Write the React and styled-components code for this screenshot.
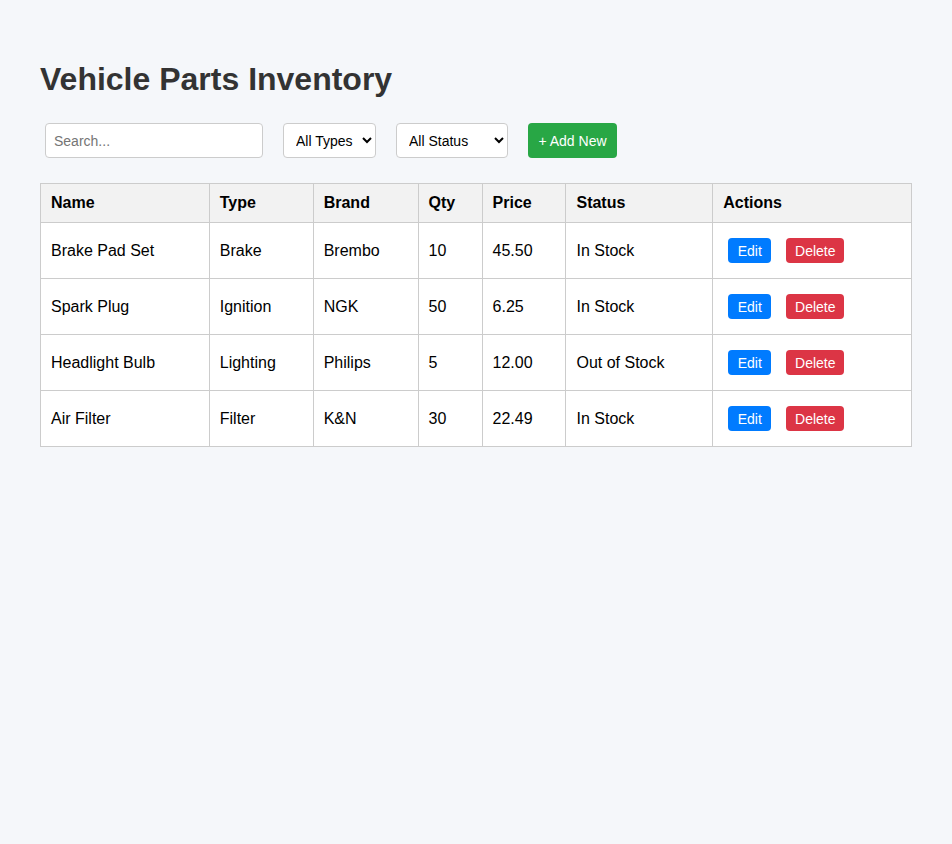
import styled, { createGlobalStyle } from 'styled-components';

const GlobalStyle = createGlobalStyle`
  body {
    margin: 0;
    padding: 40px;
    background-color: #f5f7fa;
    font-family: "Liberation Sans", Arial, sans-serif;
  }
`;

const Title = styled.h1`
  color: #333;
  font-size: 32px;
  margin: 21px 0 25px;
`;

const Controls = styled.div`
  display: flex;
  align-items: center;
  gap: 20px;
  padding-left: 5px;
  margin-bottom: 25px;
`;

const SearchInput = styled.input`
  width: 218px;
  height: 35px;
  box-sizing: border-box;
  padding: 8px;
  border: 1px solid #ccc;
  border-radius: 4px;
  font-family: inherit;
  font-size: 14px;
  background: #fff;
`;

const Select = styled.select`
  width: ${(p) => p.$width}px;
  height: 35px;
  box-sizing: border-box;
  padding: 0 4px 0 8px;
  border: 1px solid #ccc;
  border-radius: 4px;
  font-family: inherit;
  font-size: 14px;
  background: #fff;
  color: #000;
`;

const AddButton = styled.button`
  width: 89px;
  height: 35px;
  padding: 0;
  border: none;
  border-radius: 4px;
  background-color: #28a745;
  color: #fff;
  font-family: inherit;
  font-size: 14px;
`;

const Table = styled.table`
  width: 872px;
  border-collapse: collapse;
  background: #fff;
`;

const Th = styled.th`
  border: 1px solid #ccc;
  padding: 10px;
  text-align: left;
  background-color: #f2f2f2;
  font-size: 16px;
  line-height: 18px;
  color: #000;
`;

const Td = styled.td`
  border: 1px solid #ccc;
  padding: 10px;
  height: 35px;
  font-size: 16px;
  color: #000;
`;

const ActionButton = styled.button`
  margin: 5px;
  width: ${(p) => (p.$danger ? 58 : 43)}px;
  padding: 0;
  height: 25px;
  border: none;
  border-radius: 4px;
  color: #fff;
  font-family: inherit;
  font-size: 14px;
  background-color: ${(p) => (p.$danger ? '#dc3545' : '#007bff')};
  & + & {
    margin-left: 10px;
  }
`;

const columns = [
  { label: 'Name', width: 169 },
  { label: 'Type', width: 104 },
  { label: 'Brand', width: 105 },
  { label: 'Qty', width: 64 },
  { label: 'Price', width: 84 },
  { label: 'Status', width: 147 },
  { label: 'Actions', width: 199 },
];

const parts = [
  { name: 'Brake Pad Set', type: 'Brake', brand: 'Brembo', qty: 10, price: '45.50', status: 'In Stock' },
  { name: 'Spark Plug', type: 'Ignition', brand: 'NGK', qty: 50, price: '6.25', status: 'In Stock' },
  { name: 'Headlight Bulb', type: 'Lighting', brand: 'Philips', qty: 5, price: '12.00', status: 'Out of Stock' },
  { name: 'Air Filter', type: 'Filter', brand: 'K&N', qty: 30, price: '22.49', status: 'In Stock' },
];

export default function App() {
  return (
    <>
      <GlobalStyle />
      <Title>Vehicle Parts Inventory</Title>
      <Controls>
        <SearchInput placeholder="Search..." />
        <Select $width={93}>
          <option>All Types</option>
        </Select>
        <Select $width={112}>
          <option>All Status</option>
        </Select>
        <AddButton>+ Add New</AddButton>
      </Controls>
      <Table>
        <colgroup>
          {columns.map((c) => (
            <col key={c.label} style={{ width: c.width }} />
          ))}
        </colgroup>
        <thead>
          <tr>
            {columns.map((c) => (
              <Th key={c.label}>{c.label}</Th>
            ))}
          </tr>
        </thead>
        <tbody>
          {parts.map((p) => (
            <tr key={p.name}>
              <Td>{p.name}</Td>
              <Td>{p.type}</Td>
              <Td>{p.brand}</Td>
              <Td>{p.qty}</Td>
              <Td>{p.price}</Td>
              <Td>{p.status}</Td>
              <Td>
                <ActionButton>Edit</ActionButton>
                <ActionButton $danger>Delete</ActionButton>
              </Td>
            </tr>
          ))}
        </tbody>
      </Table>
    </>
  );
}
